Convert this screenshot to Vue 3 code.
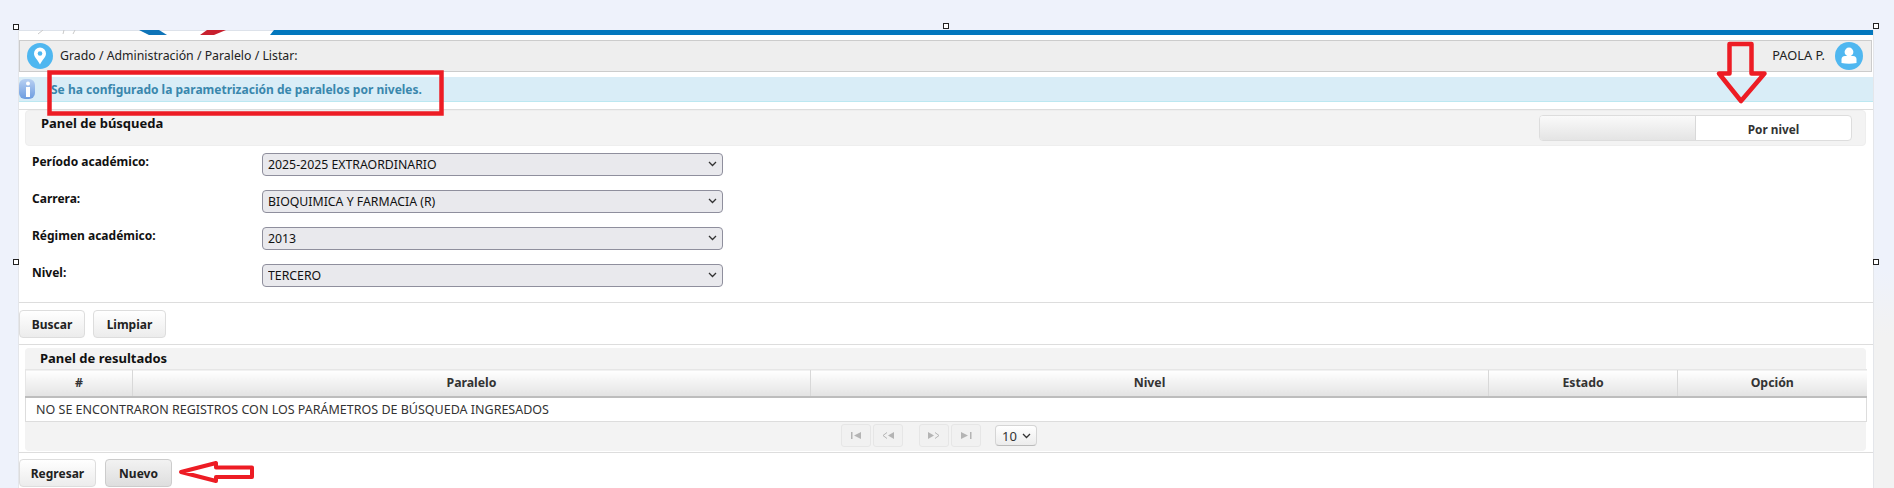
<script setup>
const filters = [
  { label: 'Período académico:', value: '2025-2025 EXTRAORDINARIO' },
  { label: 'Carrera:', value: 'BIOQUIMICA Y FARMACIA (R)' },
  { label: 'Régimen académico:', value: '2013' },
  { label: 'Nivel:', value: 'TERCERO' }
]
const columns = ['#', 'Paralelo', 'Nivel', 'Estado', 'Opción']
const widths = [107, 678, 678, 189, 189]
const handles = ['tl', 'tm', 'tr', 'ml', 'mr']
</script>

<template>
  <div class="page">
    <span v-for="h in handles" :key="h" class="handle" :class="h"></span>
    <div class="gutter"></div>

    <main class="sheet">
      <svg class="banner" width="1854" height="5" viewBox="0 0 1854 5">
        <path d="M19 4l5-4M45 0l-1 4M56 0l-2 4" fill="none" stroke="#c9c9c9" />
        <path d="M120 0h20l8 5h-18z" fill="#0f74b8" />
        <path d="M188 0h19l-12 5h-14z" fill="#c8202e" />
        <path d="M255 0h1599v5H251z" fill="#0277bd" />
      </svg>

      <header class="crumbs">
        <svg class="round" width="26" height="26" viewBox="0 0 26 26">
          <circle cx="13" cy="13" r="13" fill="#4fb7f0" />
          <path d="M13 4.500a6 6 0 0 0-6 6c0 4 4 6.500 6 11 2-4.500 6-7 6-11a6 6 0 0 0-6-6z" fill="#fff" />
          <circle cx="13" cy="10.500" r="2.300" fill="#4fb7f0" />
        </svg>
        <span class="trail">Grado / Administración / Paralelo / Listar:</span>
        <span class="user">PAOLA P.</span>
        <svg class="round" width="28" height="28" viewBox="0 0 28 28">
          <circle cx="14" cy="14" r="14" fill="#4fb7f0" />
          <circle cx="14" cy="10" r="4.400" fill="#fff" />
          <path d="M6.500 21v-3.500q0-3.500 3.500-3.500h8q3.500 0 3.500 3.500v3.500q-7.500 1.600-15 0z" fill="#fff" />
        </svg>
      </header>

      <div class="info">
        <svg width="16" height="20" viewBox="0 0 16 20">
          <defs>
            <linearGradient id="infoFill" x1="0" y1="0" x2="0" y2="1">
              <stop offset="0" stop-color="#b8d0f2" />
              <stop offset="1" stop-color="#6d9de0" />
            </linearGradient>
          </defs>
          <rect width="16" height="20" rx="6" fill="url(#infoFill)" />
          <circle cx="9" cy="4.500" r="2" fill="#fff" />
          <rect x="7" y="8" width="4" height="10" fill="#fff" />
        </svg>
        <span>Se ha configurado la parametrización de paralelos por niveles.</span>
      </div>

      <section class="panel search">
        <div class="panel-head">
          <h2>Panel de búsqueda</h2>
          <div class="toggle">
            <span class="toggle-off"></span>
            <span class="toggle-on">Por nivel</span>
          </div>
        </div>
        <div class="form">
          <div v-for="f in filters" :key="f.label" class="field">
            <label>{{ f.label }}</label>
            <div class="select-wrap">
              <select>
                <option>{{ f.value }}</option>
              </select>
              <svg class="chev" width="9" height="6" viewBox="0 0 9 6">
                <path d="M1 1l3.500 3.500L8 1" fill="none" stroke="#333" stroke-width="1.300" />
              </svg>
            </div>
          </div>
        </div>
      </section>

      <div class="actions first">
        <button class="btn buscar">Buscar</button>
        <button class="btn limpiar">Limpiar</button>
      </div>

      <section class="panel results">
        <h2>Panel de resultados</h2>
        <table>
          <colgroup>
            <col v-for="(w, i) in widths" :key="i" :style="{ width: w + 'px' }" />
          </colgroup>
          <thead>
            <tr>
              <th v-for="c in columns" :key="c">{{ c }}</th>
            </tr>
          </thead>
          <tbody>
            <tr>
              <td colspan="5">NO SE ENCONTRARON REGISTROS CON LOS PARÁMETROS DE BÚSQUEDA INGRESADOS</td>
            </tr>
          </tbody>
        </table>
        <div class="pager">
          <span class="pg">
            <svg width="11" height="7" viewBox="0 0 11 7"><path d="M0 0h1.500v7H0zM10 0v7L3 3.500z" fill="#b4b4b4" /></svg>
          </span>
          <span class="pg">
            <svg width="12" height="7" viewBox="0 0 12 7"><path d="M12 0v7L6 3.500z" fill="#b4b4b4" /><path d="M5 .5L1 3.500l4 3" fill="none" stroke="#b4b4b4" /></svg>
          </span>
          <span class="pg gap">
            <svg width="12" height="7" viewBox="0 0 12 7"><path d="M0 0v7l6-3.500z" fill="#b4b4b4" /><path d="M7 .5l4 3-4 3" fill="none" stroke="#b4b4b4" /></svg>
          </span>
          <span class="pg">
            <svg width="11" height="7" viewBox="0 0 11 7"><path d="M0 0v7l7-3.500zM9 0h1.500v7H9z" fill="#b4b4b4" /></svg>
          </span>
          <span class="size">
            10
            <svg width="9" height="6" viewBox="0 0 9 6"><path d="M1 1l3.500 3.500L8 1" fill="none" stroke="#333" stroke-width="1.300" /></svg>
          </span>
        </div>
      </section>

      <div class="actions last">
        <button class="btn regresar">Regresar</button>
        <button class="btn nuevo">Nuevo</button>
      </div>
    </main>

    <svg class="marks" width="1894" height="488" viewBox="0 0 1894 488">
      <rect x="49.500" y="72.500" width="392" height="41" fill="none" stroke="#ed1c24" stroke-width="4.500" />
      <path d="M1729.500 44h22v29.500h13L1741 101l-22-27.500h10.500z" fill="none" stroke="#ed1c24" stroke-width="4.500" stroke-linejoin="round" />
      <path d="M181 472l35-9v4.500h36v9.500h-36v4z" fill="none" stroke="#ed1c24" stroke-width="4" stroke-linejoin="round" />
    </svg>
  </div>
</template>

<style>
html, body { margin: 0; background: #eef2fb; overflow: hidden; }
</style>

<style scoped>
.page {
  position: relative;
  width: 1894px;
  height: 488px;
  overflow: hidden;
  padding: 30px 0 0 19px;
  box-sizing: border-box;
  font-family: "Noto Sans", "Open Sans", sans-serif;
  font-size: 13px;
  color: #222;
}
.gutter {
  position: absolute;
  right: 0;
  top: 270px;
  width: 20px;
  height: 218px;
  background: linear-gradient(#eef2fb, #f2f2f2 30%);
}
.sheet {
  width: 1854px;
  height: 458px;
  background: #fff;
  box-shadow: inset 0 1px 0 #dde2ea, -1px 0 0 #e4e6ea, 1px 0 0 #e4e6ea;
}
.banner { display: block; }
.crumbs {
  display: flex;
  align-items: center;
  box-sizing: border-box;
  height: 32px;
  margin-top: 5px;
  width: 1853px;
  padding: 0 8px 2px 7px;
  background: #eee;
  border: 1px solid #ccc;
  font-size: 12.300px;
}
.round { flex: none; margin-bottom: -2px; }
.trail { margin-left: 7px; flex: 1; }
.user { margin-right: 10px; font-size: 12.800px; }
.info {
  display: flex;
  align-items: center;
  gap: 16px;
  box-sizing: border-box;
  height: 25px;
  margin-top: 5px;
  background: #d9edf7;
  border-bottom: 1px solid #bce8f1;
  color: #3a87ad;
  font-weight: 700;
  font-size: 12px;
}
.panel h2 { margin: 0; font-size: 13px; font-weight: 700; color: #111; }
.search {
  margin-top: 7px;
  height: 194px;
  box-sizing: border-box;
  border-top: 1px solid #ddd;
  border-bottom: 1px solid #ddd;
}
.panel-head {
  display: flex;
  justify-content: space-between;
  box-sizing: border-box;
  height: 36px;
  margin: 0 7px 0 6px;
  padding: 3px 13px 0 15px;
  background: #f3f3f3;
  border-radius: 4px;
  border: 1px solid #eee;
}
.toggle {
  display: flex;
  box-sizing: border-box;
  width: 313px;
  height: 26px;
  margin-top: 1px;
  border: 1px solid #ddd;
  border-radius: 4px;
  overflow: hidden;
  background: #fff;
}
.toggle-off {
  width: 155px;
  background: linear-gradient(#fafafa, #e4e4e4);
  border-right: 1px solid #d8d8d8;
}
.toggle-on {
  flex: 1;
  text-align: center;
  line-height: 27px;
  font-weight: 700;
  font-size: 11.800px;
  color: #333;
}
.form {
  display: grid;
  row-gap: 14px;
  padding: 7px 0 0 13px;
}
.field {
  display: grid;
  grid-template-columns: 230px 461px;
  height: 23px;
}
.field label { font-weight: 700; font-size: 12px; line-height: 18px; color: #111; }
.select-wrap { position: relative; }
.select-wrap select {
  display: block;
  appearance: none;
  box-sizing: border-box;
  width: 100%;
  height: 23px;
  padding: 0 0 0 5px;
  background: #e9e9ed;
  border: 1px solid #8f8f9d;
  border-radius: 4px;
  font: inherit;
  font-size: 12.300px;
  color: #111;
}
.chev { position: absolute; right: 6px; top: 8px; }
.actions { display: flex; gap: 8px; }
.first { margin-top: 7px; }
.last { margin-top: 6px; gap: 9px; }
.btn {
  box-sizing: border-box;
  height: 28px;
  padding: 0;
  background: linear-gradient(#fff, #ececec);
  border: 1px solid #ddd;
  border-radius: 4px;
  font-family: inherit;
  font-size: 12px;
  font-weight: 700;
  color: #222;
}
.buscar { width: 66px; }
.limpiar { width: 73px; }
.regresar { width: 77px; }
.nuevo { width: 67px; background: linear-gradient(#f2f2f2, #dedede); border-color: #ccc; }
.results {
  margin-top: 6px;
  height: 109px;
  box-sizing: border-box;
  padding: 3px 7px 0 6px;
  border-top: 1px solid #ddd;
  border-bottom: 1px solid #ddd;
}
.results h2 {
  height: 21px;
  line-height: 20px;
  padding-left: 15px;
  background: #f3f3f3;
  border-radius: 4px 4px 0 0;
}
table {
  width: 1841px;
  table-layout: fixed;
  border-collapse: collapse;
}
th {
  height: 27px;
  padding: 0;
  background: linear-gradient(#fff, #e3e3e3);
  border-top: 1px solid #e6e6e6;
  border-left: 1px solid #d8d8d8;
  border-bottom: 2px solid #bdbdbd;
  font-size: 12.300px;
  font-weight: 700;
  color: #333;
  box-sizing: border-box;
}
th:first-child { border-left-color: #e6e6e6; }
td {
  height: 25px;
  padding: 0 0 0 10px;
  border-left: 1px solid #ddd;
  border-right: 1px solid #ddd;
  border-bottom: 1px solid #ddd;
  font-size: 12.500px;
  color: #333;
  box-sizing: border-box;
}
.pager {
  display: flex;
  align-items: center;
  box-sizing: border-box;
  height: 29px;
  padding: 0 0 2px 816px;
  gap: 2px;
  background: #f3f3f3;
  border-radius: 0 0 4px 4px;
}
.pg {
  display: flex;
  align-items: center;
  justify-content: center;
  box-sizing: border-box;
  width: 30px;
  height: 23px;
  background: #f1f1f1;
  border: 1px solid #e6e6e6;
  border-radius: 3px;
}
.gap { margin-left: 14px; }
.size {
  display: flex;
  align-items: center;
  justify-content: space-between;
  box-sizing: border-box;
  width: 42px;
  height: 21px;
  margin-left: 12px;
  padding: 0 5px 0 6px;
  background: linear-gradient(#fff, #ececec);
  border: 1px solid #d5d5d5;
  border-bottom-color: #bbb;
  border-radius: 4px;
  font-size: 13px;
  color: #333;
}
.handle {
  position: absolute;
  box-sizing: border-box;
  width: 6px;
  height: 6px;
  background: #fff;
  border: 1px solid #222;
}
.tl { left: 13px; top: 24px; }
.tm { left: 943px; top: 23px; }
.tr { left: 1873px; top: 23px; }
.ml { left: 13px; top: 259px; }
.mr { left: 1873px; top: 259px; }
.marks { position: absolute; left: 0; top: 0; pointer-events: none; }
</style>
